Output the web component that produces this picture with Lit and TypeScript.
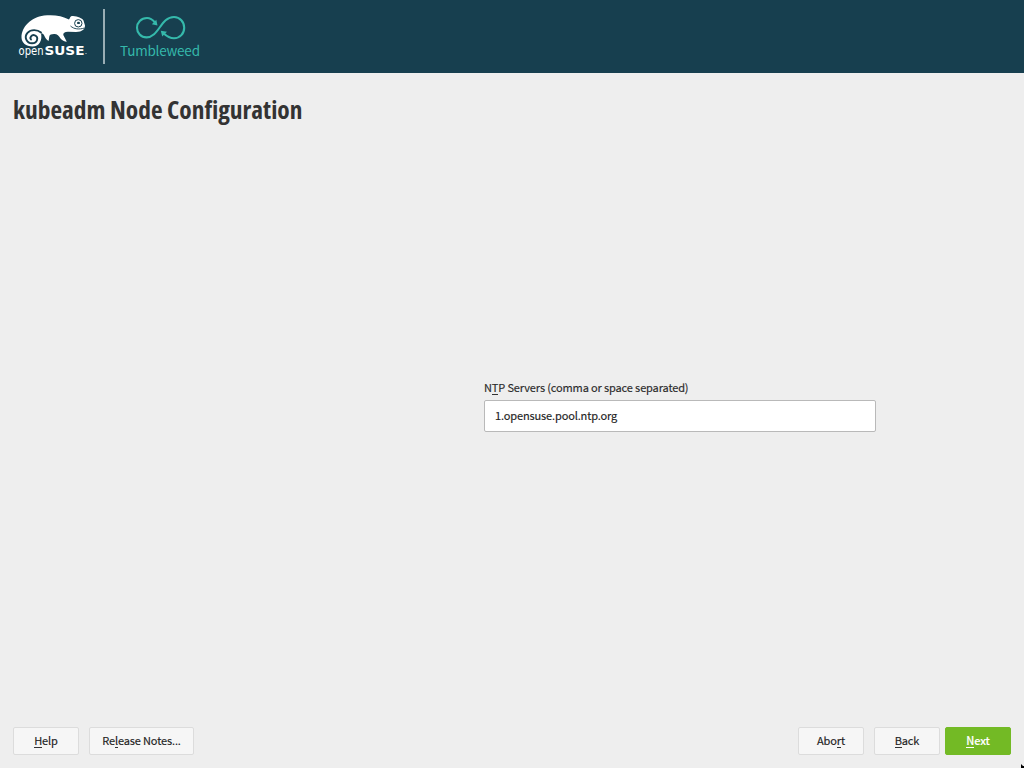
import { LitElement, html, css } from "lit";
import { customElement } from "lit/decorators.js";

@customElement("brand-logo")
class BrandLogo extends LitElement {
  static styles = css`
    :host { display: block; width: 220px; height: 73px; }
    svg { display: block; }
    .open { font: 400 11.500px "DejaVu Sans", sans-serif; }
    .sans { font-family: "Noto Sans CJK SC", sans-serif; font-weight: 400; }
    .wide { font: 700 12.600px "DejaVu Sans", sans-serif; }
  `;
  render() {
    return html`<svg width="220" height="73" viewBox="0 0 220 73">
      <path fill="#fff" d="M21.500 37.500C21.500 27 31 17.500 44 15.600C53 14.400 62 15.700 69 19.500L70 17.800C70.300 16.300 71.500 15.900 73 16C78 16.600 82 18 83.500 20.500L85 25.500C84.800 29.500 82.500 31.600 76 32L68 31.800C64.500 32 63 33.200 63.300 35L66.800 41.700C64.500 41.500 62 40.500 60.500 38.500C59 36 57 33.800 54 34C51.500 34 49.500 34.700 49.300 36.500L48.600 41C46.500 40 45.300 38 44.200 35.500C43.500 34 42.500 33.500 41 33.300C42.500 40.500 39.500 46.500 32.500 46.500C26 46.500 21.500 42.500 21.500 37.500Z"/>
      <path fill="none" stroke="#173f4f" stroke-width="1.900" stroke-linecap="round" d="M41 32.500C37.500 29.500 31 29 27.500 32.800C23.800 37 26.500 43.300 32 43.300C37.500 43.300 39 37 34.800 35.300C31.700 34.300 29.300 37.500 31 39.500"/>
      <circle cx="78.300" cy="23.300" r="3.700" fill="none" stroke="#173f4f" stroke-width="1"/>
      <ellipse cx="78.500" cy="22.900" rx="1.500" ry="1.200" fill="#173f4f"/>
      <path fill="none" stroke="#173f4f" stroke-width=".9" d="M70.500 26C74 29.200 79 29.700 84.500 28"/>
      <text class="open" x="18.500" y="54.500" fill="#fff" textLength="25" lengthAdjust="spacingAndGlyphs">open</text>
      <text class="wide" x="44.500" y="54.500" fill="#fff" textLength="40" lengthAdjust="spacingAndGlyphs">SUSE</text>
      <rect x="85.500" y="53" width="1" height="1" fill="#c4d0d4"/>
      <rect x="103" y="9" width="2" height="55" fill="#99adb4"/>
      <path fill="none" stroke="#35b9ab" stroke-width="2.100" d="M155 22.500C152.500 19.500 150 18 147 18C141 18 137 22.500 137 27.700C137 33 141 37.400 146.500 37.400C159 37.400 160.500 17 174 17C180 17 184.200 22 184.200 27.700C184.200 33.500 180 38.200 174 38.200C169.500 38.200 166.500 36 163.500 33.200"/>
      <path fill="#35b9ab" d="M157.500 25.500L151.800 24.300L156.300 19.800ZM160.800 30.800L167 31.700L162.200 36.500Z"/>
      <text class="sans" x="120" y="55.500" font-size="13.500" fill="#35b9ab" textLength="80" lengthAdjust="spacing">Tumbleweed</text>
    </svg>`;
  }
}

@customElement("app-root")
class AppRoot extends LitElement {
  static styles = css`
    :host {
      display: flex; flex-direction: column; box-sizing: border-box;
      width: 1024px; height: 768px; overflow: hidden; position: relative;
      background: #eee; color: #333;
      font: 400 11px/16px "Noto Sans CJK SC", sans-serif;
      letter-spacing: -0.135px; -webkit-text-stroke: .15px;
    }
    header { height: 73px; background: #173f4f; flex: none; letter-spacing: 0; -webkit-text-stroke: 0; }
    h1 {
      margin: 19px 13px 0; height: 35px; white-space: nowrap;
      letter-spacing: 0; -webkit-text-stroke: 0;
      font: 700 25.400px/34px "Open Sans", sans-serif; font-stretch: 75%;
    }
    main { flex: 1; padding: 252px 0 0 484px; }
    label { display: block; height: 21px; color: #2a2a2a; }
    input {
      display: block; box-sizing: border-box; width: 392px; height: 32px;
      padding: 0 10px 2px; border: 1px solid #b9b9b9; border-radius: 2px;
      background: #fff; color: #222; font: inherit; letter-spacing: inherit; outline: none;
    }
    u { text-decoration: none; box-shadow: inset 0 -1px #333; display: inline-block; height: 16px; vertical-align: top; }
    footer { display: flex; height: 28px; padding: 0 13px 13px; }
    button {
      box-sizing: border-box; width: 66px; height: 28px; padding: 0 0 2px; margin-right: 10px;
      border: 1px solid #dcdcdc; border-radius: 2px; background: #f6f6f6;
      color: #222; font: inherit; letter-spacing: inherit;
    }
    .notes { width: 105px; margin-right: auto; }
    .back { margin-right: 5px; }
    .next { margin: 0; background: #73ba25; border-color: #73ba25; color: #fff; font-weight: 500; }
    .next u { box-shadow: inset 0 -1px #fff; }
    .pointer { position: absolute; right: 0; bottom: 0; }
  `;
  render() {
    return html`
      <header><brand-logo></brand-logo></header>
      <h1>kubeadm Node Configuration</h1>
      <main>
        <label for="ntp">N<u>T</u>P Servers (comma or space separated)</label>
        <input id="ntp" value="1.opensuse.pool.ntp.org" />
      </main>
      <footer>
        <button><u>H</u>elp</button>
        <button class="notes">Re<u>l</u>ease Notes...</button>
        <button>Abo<u>r</u>t</button>
        <button class="back"><u>B</u>ack</button>
        <button class="next"><u>N</u>ext</button>
      </footer>
      <svg class="pointer" width="4" height="4"><path d="M1 0L3 2H4V4H1Z" fill="#000"/></svg>
    `;
  }
}
